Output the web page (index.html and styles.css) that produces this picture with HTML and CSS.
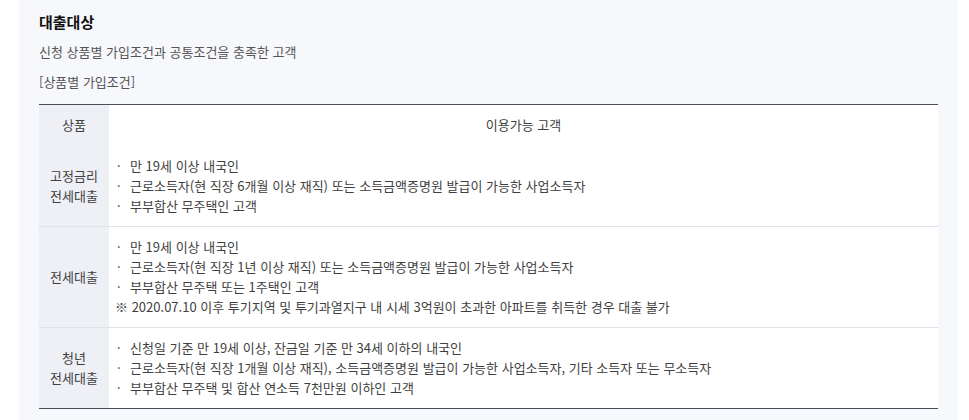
FILE: index.html
```html
<!DOCTYPE html>
<html lang="ko">
<head>
<meta charset="utf-8">
<link rel="stylesheet" href="styles.css">
</head>
<body>
<div class="wrap">
  <section class="panel">
    <h3 class="title">대출대상</h3>
    <p class="desc">신청 상품별 가입조건과 공통조건을 충족한 고객</p>
    <p class="desc sub">[상품별 가입조건]</p>
    <table class="tbl">
      <colgroup><col class="c1"><col></colgroup>
      <thead>
        <tr><th class="head">상품</th><th class="head main">이용가능 고객</th></tr>
      </thead>
      <tbody>
        <tr>
          <th>고정금리<br>전세대출</th>
          <td>
            <ul class="list">
              <li>만 19세 이상 내국인</li>
              <li>근로소득자(현 직장 6개월 이상 재직) 또는 소득금액증명원 발급이 가능한 사업소득자</li>
              <li>부부합산 무주택인 고객</li>
            </ul>
          </td>
        </tr>
        <tr>
          <th>전세대출</th>
          <td>
            <ul class="list">
              <li>만 19세 이상 내국인</li>
              <li>근로소득자(현 직장 1년 이상 재직) 또는 소득금액증명원 발급이 가능한 사업소득자</li>
              <li>부부합산 무주택 또는 1주택인 고객</li>
            </ul>
            <p class="note">※ 2020.07.10 이후 투기지역 및 투기과열지구 내 시세 3억원이 초과한 아파트를 취득한 경우 대출 불가</p>
          </td>
        </tr>
        <tr>
          <th>청년<br>전세대출</th>
          <td>
            <ul class="list">
              <li>신청일 기준 만 19세 이상, 잔금일 기준 만 34세 이하의 내국인</li>
              <li>근로소득자(현 직장 1개월 이상 재직), 소득금액증명원 발급이 가능한 사업소득자, 기타 소득자 또는 무소득자</li>
              <li>부부합산 무주택 및 합산 연소득 7천만원 이하인 고객</li>
            </ul>
          </td>
        </tr>
      </tbody>
    </table>
  </section>
</div>
</body>
</html>
```

FILE: styles.css
```css
* { box-sizing: border-box; }
html, body { margin: 0; padding: 0; background: #ffffff; }
body {
  font-family: "Noto Sans CJK KR", "Noto Sans", sans-serif;
  color: #444;
}
.wrap { padding: 0 11px 0 19px; }
.panel {
  background: #f7f8fc;
  padding: 10px 20px 12px 20px;
}
.title {
  margin: 0;
  font-size: 15px;
  line-height: 24px;
  font-weight: 700;
  color: #111;
}
.desc {
  margin: 6px 0 0;
  font-size: 13px;
  line-height: 24px;
  color: #555;
}
.desc.sub { margin-top: 6px; }
.tbl {
  margin-top: 10px;
  width: 100%;
  border-collapse: collapse;
  border-top: 1px solid #4a4e5a;
  border-bottom: 1px solid #4a4e5a;
  background: #fff;
  font-size: 13px;
  color: #3f3f3f;
}
.c1 { width: 70px; }
.tbl th, .tbl td {
  border-bottom: 1px solid #dfe1e8;
  font-weight: 400;
}
.tbl tr:last-child th, .tbl tr:last-child td { border-bottom: none; }
.tbl th {
  background: #eef0f6;
  text-align: center;
  line-height: 20px;
  padding: 0;
  color: #3f3f3f;
}
.tbl th.head { height: 41px; }
.tbl th.main { background: #fff; }
.tbl td {
  padding: 10px 10px 10px 8px;
  vertical-align: middle;
}
.list { margin: 0; padding: 0; list-style: none; }
.list li {
  line-height: 20px;
  padding-left: 13px;
  position: relative;
}
.list li::before {
  content: "·";
  position: absolute;
  left: 0;
  top: 0;
}
.note { margin: 0 0 0 -2px; line-height: 20px; }
```
